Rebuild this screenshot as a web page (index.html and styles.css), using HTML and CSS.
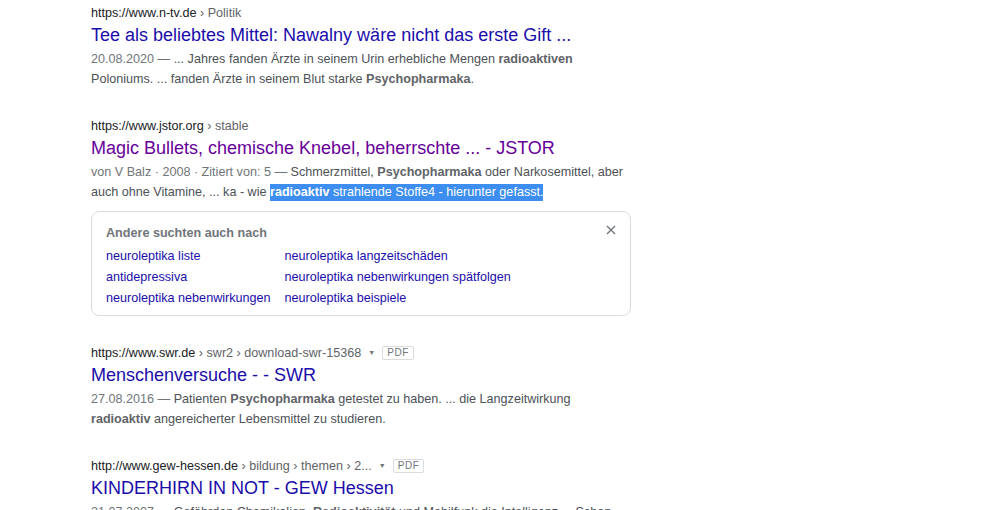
FILE: index.html
```html
<!DOCTYPE html>
<html lang="de">
<head>
<meta charset="utf-8">
<title>Suchergebnisse</title>
<link rel="stylesheet" href="styles.css">
</head>
<body>
<main class="results">
  <div class="result">
    <div class="url">https://www.n-tv.de<span class="crumb"> › Politik</span></div>
    <a class="title" href="#">Tee als beliebtes Mittel: Nawalny wäre nicht das erste Gift ...</a>
    <div class="snippet"><span class="date">20.08.2020 — </span>... Jahres fanden Ärzte in seinem Urin erhebliche Mengen <b>radioaktiven</b> Poloniums. ... fanden Ärzte in seinem Blut starke <b>Psychopharmaka</b>.</div>
  </div>

  <div class="result">
    <div class="url">https://www.jstor.org<span class="crumb"> › stable</span></div>
    <a class="title visited" href="#">Magic Bullets, chemische Knebel, beherrschte ... - JSTOR</a>
    <div class="snippet"><span class="date">von V Balz · 2008 · Zitiert von: 5 — </span>Schmerzmittel, <b>Psychopharmaka</b> oder Narkosemittel, aber auch ohne Vitamine, ... ka - wie <span class="sel"><b>radioaktiv</b> strahlende Stoffe4 - hierunter gefasst.</span></div>
  </div>

  <section class="related">
    <div class="related-head">
      <span>Andere suchten auch nach</span>
      <svg class="close" width="10" height="10" viewBox="0 0 10 10"><path d="M1 1L9 9M9 1L1 9" stroke="#70757a" stroke-width="1.3"/></svg>
    </div>
    <div class="related-grid">
      <a href="#">neuroleptika liste</a>
      <a href="#">neuroleptika langzeitschäden</a>
      <a href="#">antidepressiva</a>
      <a href="#">neuroleptika nebenwirkungen spätfolgen</a>
      <a href="#">neuroleptika nebenwirkungen</a>
      <a href="#">neuroleptika beispiele</a>
    </div>
  </section>

  <div class="result">
    <div class="url">https://www.swr.de<span class="crumb"> › swr2 › download-swr-15368</span><span class="caret">▼</span><span class="pdf">PDF</span></div>
    <a class="title" href="#">Menschenversuche - - SWR</a>
    <div class="snippet"><span class="date">27.08.2016 — </span>Patienten <b>Psychopharmaka</b> getestet zu haben. ... die Langzeitwirkung <b>radioaktiv</b> angereicherter Lebensmittel zu studieren.</div>
  </div>

  <div class="result">
    <div class="url">http://www.gew-hessen.de<span class="crumb"> › bildung › themen › 2...</span><span class="caret">▼</span><span class="pdf">PDF</span></div>
    <a class="title" href="#">KINDERHIRN IN NOT - GEW Hessen</a>
    <div class="snippet"><span class="date">21.07.2007 — </span>Gefährden Chemikalien, <b>Radioaktivität</b> und Mobilfunk die Intelligenz ... Schon</div>
  </div>
</main>
</body>
</html>
```

FILE: styles.css
```css
html, body {
  margin: 0;
  padding: 0;
  background: #fff;
}

body {
  font-family: "Liberation Sans", Arial, sans-serif;
  color: #4d5156;
  overflow: hidden;
  height: 510px;
}

.results {
  padding: 4px 0 0 91px;
  width: 540px;
}

.result {
  margin-bottom: 28px;
}

.url {
  font-size: 12.6px;
  line-height: 18px;
  color: #202124;
  white-space: nowrap;
  display: flex;
  align-items: center;
}

.crumb {
  color: #5f6368;
  white-space: pre;
}

.caret {
  color: #70757a;
  font-size: 7px;
  margin: 0 7px 0 7px;
}

.pdf {
  font-size: 10px;
  line-height: 12px;
  color: #70757a;
  border: 1px solid #dadce0;
  border-radius: 2px;
  padding: 0 4px;
  letter-spacing: 0.6px;
}

.title {
  display: block;
  font-size: 18px;
  line-height: 26px;
  color: #1a0dab;
  text-decoration: none;
  white-space: nowrap;
}

.title.visited {
  color: #660099;
}

.snippet {
  font-size: 12.6px;
  line-height: 19.5px;
  margin-top: 2px;
  color: #4d5156;
}

.snippet b {
  color: #5f6368;
}

.date {
  color: #70757a;
}

.sel {
  background: #3d8ef0;
  color: #fff;
  padding: 1px 0 2px;
}

.sel b {
  color: #fff;
}

.related {
  margin: -19px 0 28px;
  border: 1px solid #dadce0;
  border-radius: 8px;
  padding: 11px 13px 6px 14px;
}

.related-head {
  display: flex;
  justify-content: space-between;
  align-items: center;
  font-size: 12.6px;
  line-height: 20px;
  font-weight: bold;
  color: #70757a;
  margin-bottom: 3px;
}

.close {
  margin: -6px 1px 0 0;
}

.related-grid {
  display: grid;
  grid-template-columns: max-content max-content;
  column-gap: 14px;
}

.related-grid a {
  font-size: 12.6px;
  line-height: 21px;
  color: #1a0dab;
  text-decoration: none;
  white-space: nowrap;
}
```
